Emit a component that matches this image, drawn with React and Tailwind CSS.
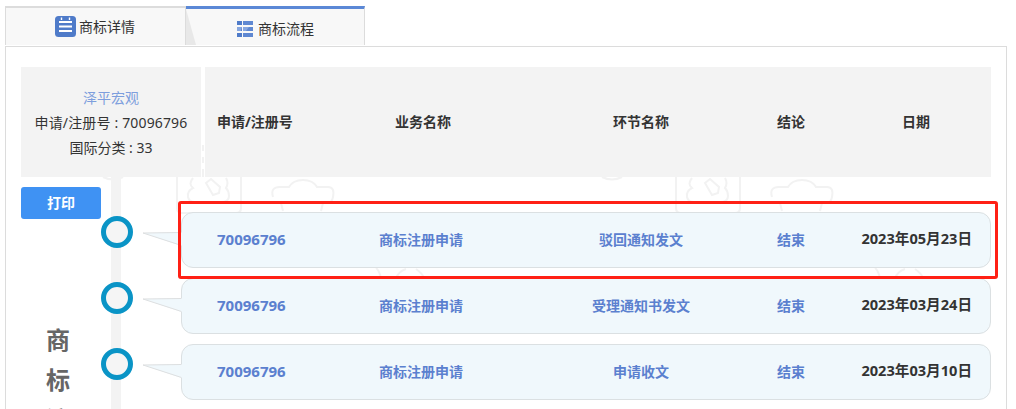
import React from 'react';

const rows = [
  { no: '70096796', biz: '商标注册申请', step: '驳回通知发文', result: '结束', date: '2023年05月23日' },
  { no: '70096796', biz: '商标注册申请', step: '受理通知书发文', result: '结束', date: '2023年03月24日' },
  { no: '70096796', biz: '商标注册申请', step: '申请收文', result: '结束', date: '2023年03月10日' },
];

const font = { fontFamily: '"Noto Sans", "Noto Sans CJK SC", sans-serif' };

const DetailIcon = () => (
  <svg width="21" height="21" viewBox="0 0 21 21">
    <rect width="21" height="21" rx="3.5" fill="#4f7bc9" />
    <path d="M4 6h13M4 10.5h13M4 15h13" stroke="#fff" strokeWidth="1.8" />
    <path d="M6.5 1.5v2.5M14.5 1.5v2.5" stroke="#fff" strokeWidth="1.4" />
  </svg>
);

const FlowIcon = () => (
  <svg width="16" height="16" viewBox="0 0 16 16">
    <path d="M0 0h5v4H0zM0 6h5v4H0zM0 12h5v4H0z" fill="#4f7bc9" />
    <path d="M6 0h10v4H6zM6 6h10v4H6zM6 12h10v4H6z" fill="#5f88d2" />
    <path d="M0 10h4l1-4H0zM6 10h3l3-4H6z" fill="#86a6e0" />
  </svg>
);

const Watermark = ({ x }) => (
  <svg className="absolute overflow-visible" style={{ left: x, top: 98 }} width="190" height="140" viewBox="0 0 190 140" fill="none" stroke="#f2f2f2" strokeWidth="2">
    <path d="M27 0v6M27 12v6M27 24v8" />
    <path d="M1 30v33q0 5 5 5h54q5 0 5-5V30" />
    <path d="M17 33q-5 6 0 10q-6 3-5 9q1 5 7 5h26q8 0 8-6q0-5-3-8q3-5 0-10" />
    <path d="M30 38l5-4l9 8l-1 6l-6 2z" />
    <path d="M97 52q-3-10 7-10h9q4-7 14-7q10 0 14 7h11q7 0 5 10q-1 6-6 6h-4l-2 8M100 58h5l2 8M122 58h14" />
    <path d="M-73 32q10 5 20 0" />
    <path d="M200 123q3 2 5 10M220 133q3-7 10-9M240 124q6 4 8 9" />
  </svg>
);

const Row = ({ row }) => (
  <div className="flex items-start">
    <div className="relative z-10 mt-[4px] w-[32px] h-[32px] shrink-0 rounded-full border-[5px] border-[#0a94c6] bg-[#f5f5f5]" />
    <svg className="relative z-20 ml-[10px] mt-[20px] -mr-[1px] shrink-0" width="39" height="14" viewBox="0 0 39 14">
      <path d="M0 1L39 0V14L38 14Z" fill="#f0f8fc" />
      <path d="M38.5 0.5L0 1L38.5 13.5" fill="none" stroke="#dddfe0" />
    </svg>
    <div className="relative z-10 flex-1 h-[56px] pb-[2px] rounded-[12px] border border-[#dbe0e2] bg-[#f0f8fc] grid grid-cols-[35px_90px_228px_212px_88px_1fr] items-center font-bold text-[14px] text-[#5b80cf]">
      <div />
      <div className="text-[15px]">{row.no}</div>
      <div className="text-center">{row.biz}</div>
      <div className="text-center">{row.step}</div>
      <div className="text-center">{row.result}</div>
      <div className="text-right pr-[18px] text-[14.6px] text-[#333]">{row.date}</div>
    </div>
  </div>
);

export default function App() {
  return (
    <div className="w-[1016px] h-[409px] overflow-hidden bg-white pt-[6px] pl-[5px] text-[14px] text-[#333]" style={font}>
      <div className="flex h-[39px]">
        <div className="w-[181px] flex items-center pl-[49px] pb-[1px] gap-[3px] border-t-2 border-l border-r border-[#dcdcdc] bg-[#f8f8f8] text-[14px]">
          <DetailIcon />
          <span>商标详情</span>
        </div>
        <div className="relative w-[179px] flex items-center pl-[51px] pt-[3px] gap-[5px] border-t-[3px] border-t-[#5b88d6] border-r border-r-[#dcdcdc] bg-[#f8f8f8]">
          <svg className="absolute left-0 top-0" width="11" height="36" viewBox="0 0 11 36">
            <path d="M0 0L10 36H0Z" fill="#e8e8e8" />
          </svg>
          <FlowIcon />
          <span>商标流程</span>
        </div>
      </div>
      <div className="relative mt-[1px] w-[1002px] h-[400px] border border-[#dcdcdc] pt-[20px] pl-[15px]">
        <Watermark x={170} />
        <Watermark x={669} />
        <div className="absolute left-[105px] top-[130px] bottom-0 w-[10px] bg-[#f3f3f3]" />

        <div className="flex gap-[4px] h-[110px]">
          <div className="relative z-10 w-[180px] bg-[#f3f3f3] flex flex-col items-center justify-center leading-[25px]">
            <span className="text-[#7d9edd]">泽平宏观</span>
            <span className="tracking-[0.15px]">申请/注册号 : 70096796</span>
            <span>国际分类 : 33</span>
          </div>
          <div className="relative z-10 w-[786px] bg-[#f3f3f3] pl-[12px] pb-[2px] grid grid-cols-[90px_232px_204px_96px_154px] items-center font-bold">
            <div>申请/注册号</div>
            <div className="text-center">业务名称</div>
            <div className="text-center">环节名称</div>
            <div className="text-center">结论</div>
            <div className="text-center">日期</div>
          </div>
        </div>

        <div className="flex">
          <div className="w-[80px] shrink-0 pt-[10px] relative z-10">
            <button className="w-[80px] h-[32px] pb-[2px] rounded-[3px] bg-[#3f92f3] text-white font-bold">打印</button>
            <div className="mt-[101px] ml-[25px] w-[24px] text-[24px] leading-[40px] font-bold text-[#666]">
              <div>商</div>
              <div>标</div>
              <div>流</div>
            </div>
          </div>
          <div className="w-[890px] pt-[35px] flex flex-col gap-[10px]">
            {rows.map((row, i) => (
              <Row key={i} row={row} />
            ))}
          </div>
        </div>

        <div className="absolute z-30 left-[172px] top-[154px] w-[820px] h-[78px] border-[3px] border-[#ff2015] rounded-[3px]" />
      </div>
    </div>
  );
}
